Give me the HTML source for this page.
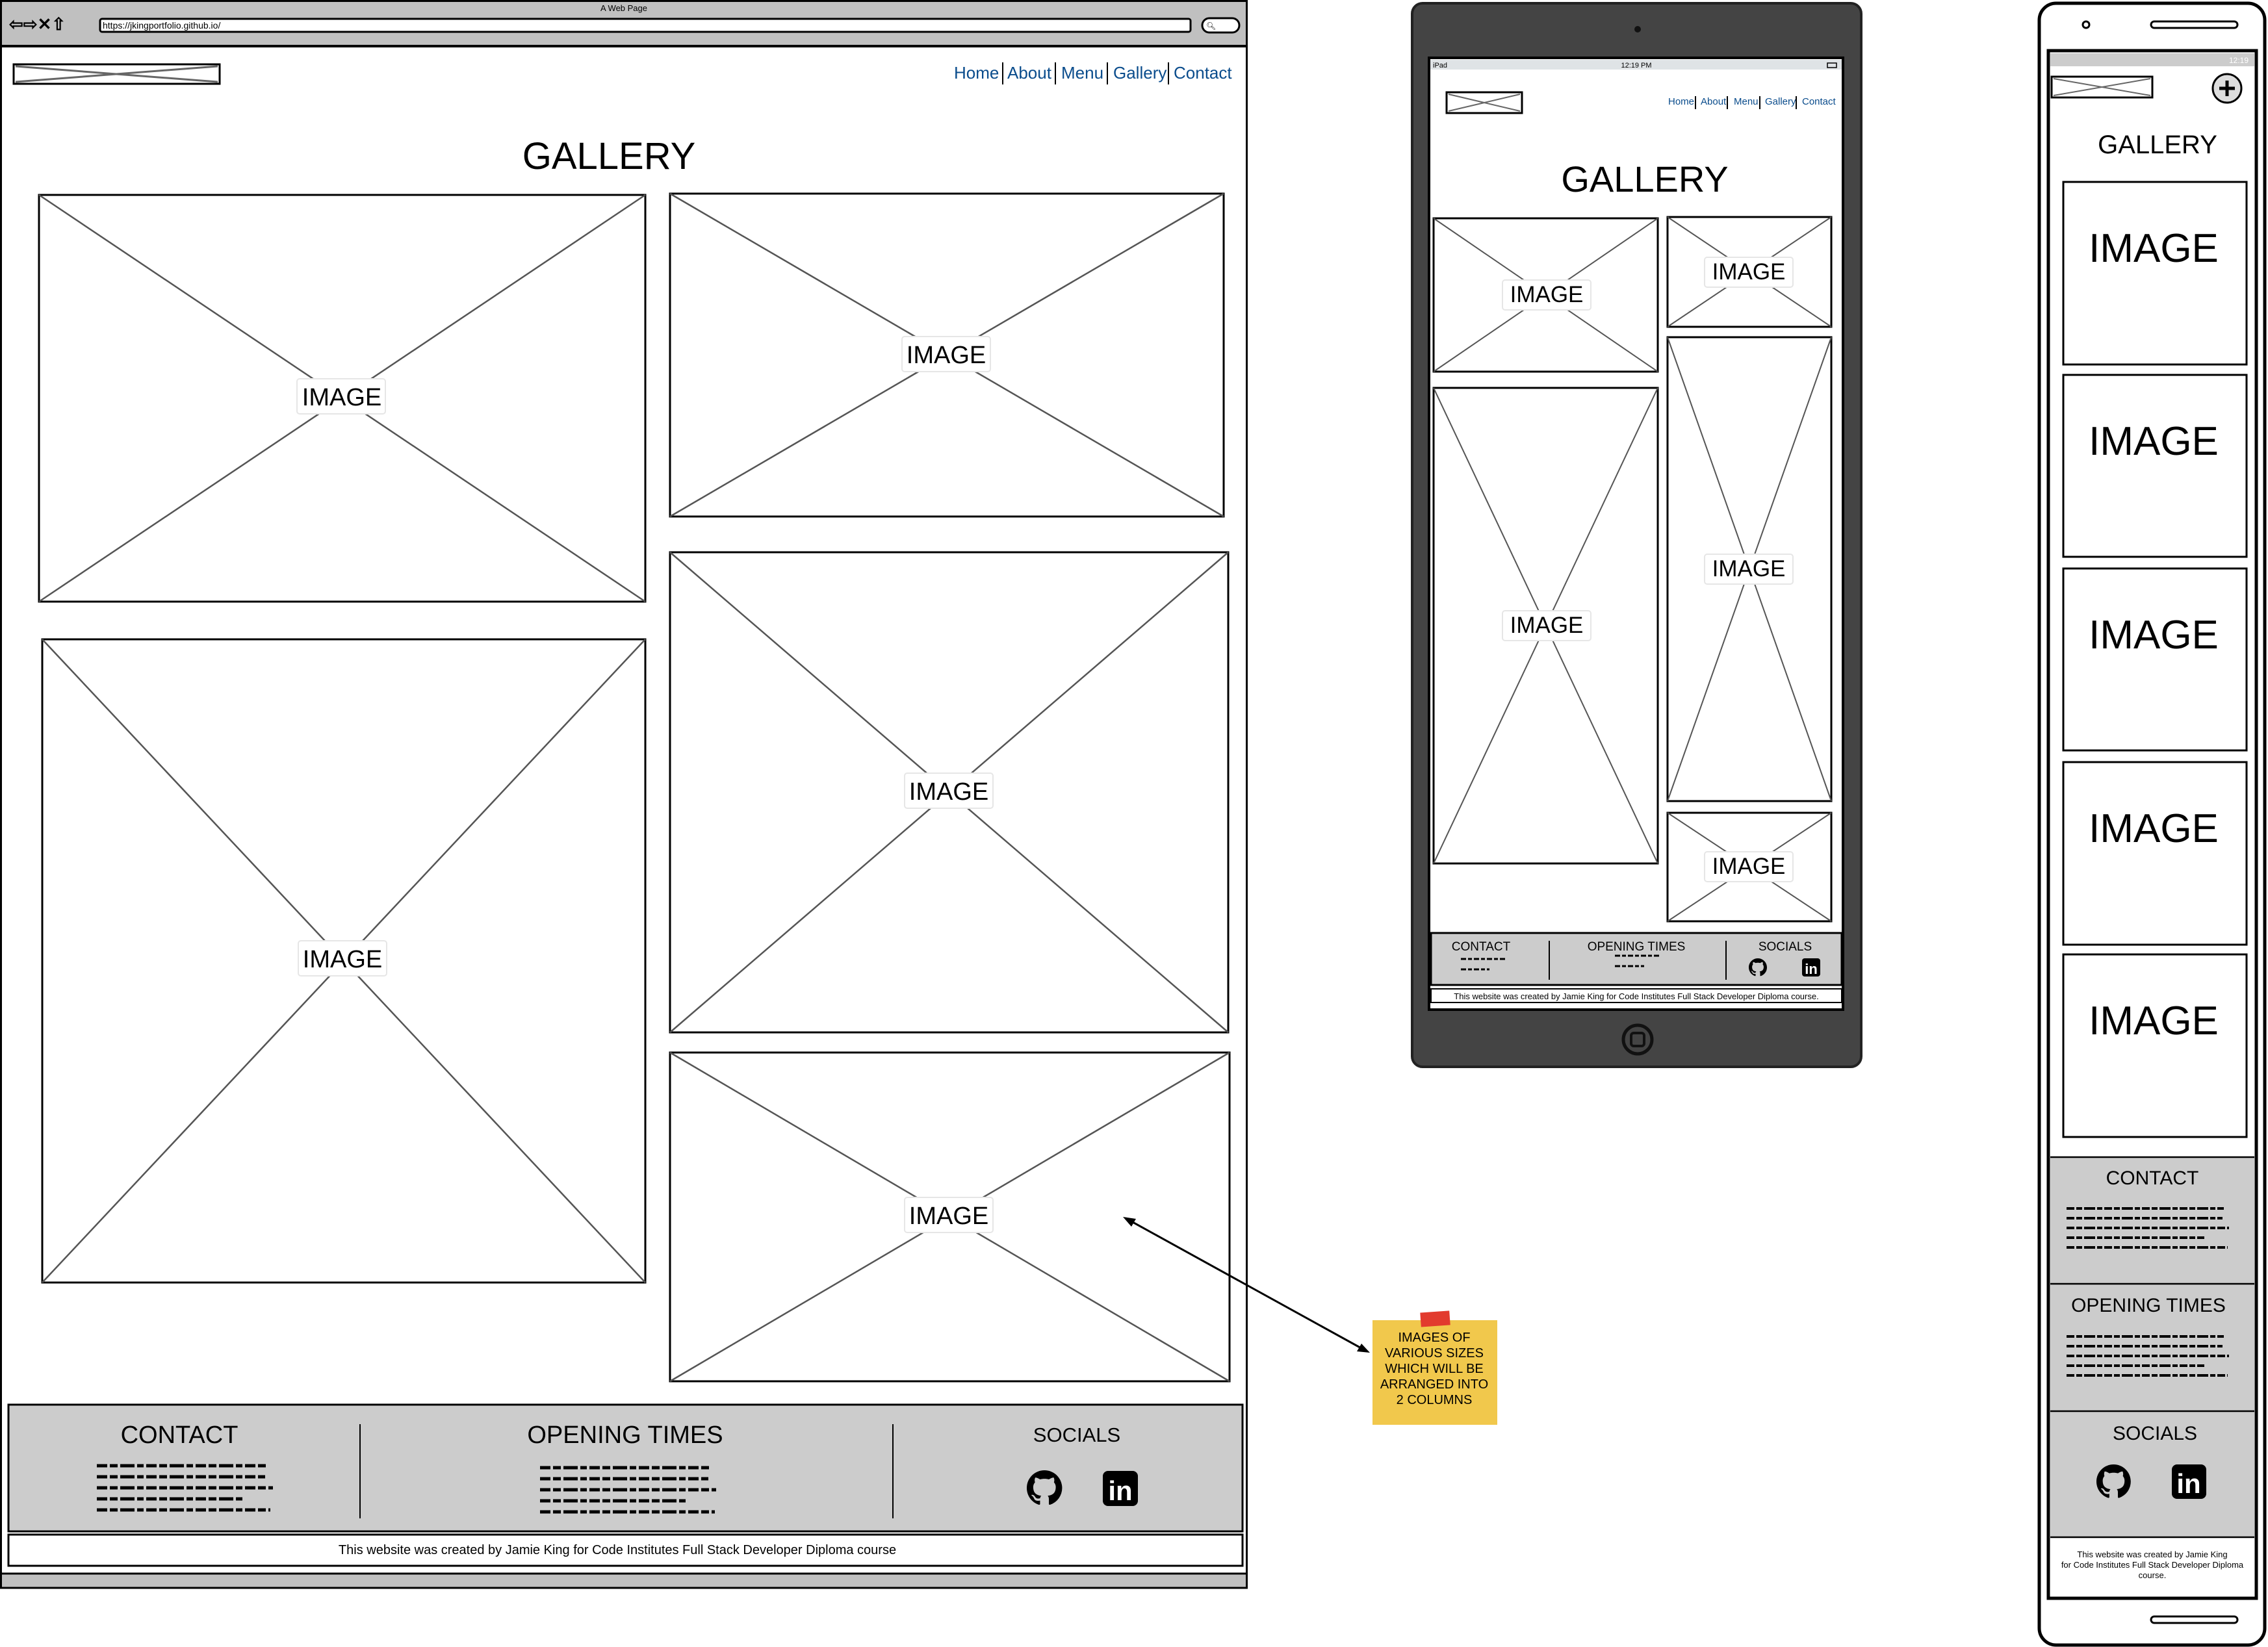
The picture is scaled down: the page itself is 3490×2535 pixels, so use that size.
<!DOCTYPE html>
<html><head><meta charset="utf-8"><style>
html,body{margin:0;padding:0;background:#fff;width:3490px;height:2535px;overflow:hidden}
svg{display:block}
text{font-family:"Liberation Sans",sans-serif;fill:#000}
</style></head><body>
<svg width="3490" height="2535" viewBox="0 0 3490 2535" xmlns="http://www.w3.org/2000/svg">
<defs>
<path id="gh" d="M8 0C3.58 0 0 3.58 0 8c0 3.54 2.29 6.53 5.47 7.59.4.07.55-.17.55-.38 0-.19-.01-.82-.01-1.49-2.01.37-2.53-.49-2.69-.94-.09-.23-.48-.94-.82-1.13-.28-.15-.68-.52-.01-.53.63-.01 1.08.58 1.23.82.72 1.21 1.87.87 2.33.66.07-.52.28-.87.51-1.07-1.78-.2-3.64-.89-3.64-3.95 0-.87.31-1.59.82-2.15-.08-.2-.36-1.02.08-2.12 0 0 .67-.21 2.2.82.64-.18 1.32-.27 2-.27.68 0 1.36.09 2 .27 1.53-1.04 2.2-.82 2.2-.82.44 1.1.16 1.92.08 2.12.51.56.82 1.27.82 2.15 0 3.07-1.87 3.75-3.65 3.95.29.25.54.73.54 1.48 0 1.07-.01 1.93-.01 2.2 0 .21.15.46.55.38A8.013 8.013 0 0 0 16 8c0-4.42-3.58-8-8-8z"/>
</defs>

<!-- ============ DESKTOP ============ -->
<rect x="1.5" y="1.5" width="1917" height="2442" fill="#fff" stroke="#000" stroke-width="3"/>
<rect x="1.5" y="1.5" width="1917" height="70" fill="#c0c0c0" stroke="#000" stroke-width="3"/>
<line x1="0" y1="71" x2="1919" y2="71" stroke="#000" stroke-width="4"/>
<text x="960" y="17" font-size="13" text-anchor="middle">A Web Page</text>
<text x="14" y="46" font-size="26" font-weight="bold">⇦⇨✕⇧</text>
<rect x="154" y="29" width="1678" height="20" rx="3" fill="#fff" stroke="#000" stroke-width="3"/>
<text x="158" y="44" font-size="14">https://jkingportfolio.github.io/</text>
<rect x="1850" y="28" width="57" height="22" rx="11" fill="#fff" stroke="#000" stroke-width="3"/>
<text x="1856" y="44" font-size="12">🔍︎</text>
<rect x="1.5" y="2422" width="1917" height="22" fill="#c0c0c0" stroke="#000" stroke-width="3"/>

<!-- logo -->
<rect x="21" y="99" width="317" height="30" fill="#fff" stroke="#000" stroke-width="3"/>
<line x1="24" y1="102" x2="335" y2="126" stroke="#666" stroke-width="3"/>
<line x1="24" y1="126" x2="335" y2="102" stroke="#666" stroke-width="3"/>
<!-- nav -->
<g font-size="26">
<text x="1468" y="121" style="fill:#0a4c8c">Home</text>
<text x="1550" y="121" style="fill:#0a4c8c">About</text>
<text x="1633" y="121" style="fill:#0a4c8c">Menu</text>
<text x="1713" y="121" style="fill:#0a4c8c">Gallery</text>
<text x="1806" y="121" style="fill:#0a4c8c">Contact</text>
</g>
<g stroke="#000" stroke-width="2">
<line x1="1543" y1="96" x2="1543" y2="130"/><line x1="1624" y1="96" x2="1624" y2="130"/>
<line x1="1704" y1="96" x2="1704" y2="130"/><line x1="1798" y1="96" x2="1798" y2="130"/>
</g>
<text x="937" y="260" font-size="58" text-anchor="middle">GALLERY</text>

<!-- desktop images -->
<g fill="#fff" stroke="#000" stroke-width="3">
<rect x="60" y="300" width="933" height="626"/>
<rect x="1031" y="298" width="852" height="497"/>
<rect x="65" y="984" width="928" height="990"/>
<rect x="1031" y="850" width="859" height="739"/>
<rect x="1031" y="1620" width="861" height="506"/>
</g>
<g stroke="#555" stroke-width="2.5">
<line x1="60" y1="300" x2="993" y2="926"/><line x1="60" y1="926" x2="993" y2="300"/>
<line x1="1031" y1="298" x2="1883" y2="795"/><line x1="1031" y1="795" x2="1883" y2="298"/>
<line x1="65" y1="984" x2="993" y2="1974"/><line x1="65" y1="1974" x2="993" y2="984"/>
<line x1="1031" y1="850" x2="1890" y2="1589"/><line x1="1031" y1="1589" x2="1890" y2="850"/>
<line x1="1031" y1="1620" x2="1892" y2="2126"/><line x1="1031" y1="2126" x2="1892" y2="1620"/>
</g>
<g fill="#fff" stroke="#e6e6e6" stroke-width="2">
<rect x="457" y="583" width="136" height="54" rx="4"/>
<rect x="1388" y="518" width="136" height="54" rx="4"/>
<rect x="459" y="1448" width="136" height="54" rx="4"/>
<rect x="1392" y="1190" width="136" height="54" rx="4"/>
<rect x="1392" y="1843" width="136" height="54" rx="4"/>
</g>
<g font-size="38" text-anchor="middle">
<text x="526" y="624">IMAGE</text>
<text x="1456" y="559">IMAGE</text>
<text x="527" y="1489">IMAGE</text>
<text x="1460" y="1231">IMAGE</text>
<text x="1460" y="1884">IMAGE</text>
</g>

<!-- desktop footer -->
<rect x="13" y="2162" width="1899" height="195" fill="#ccc" stroke="#000" stroke-width="3"/>
<line x1="554" y1="2192" x2="554" y2="2337" stroke="#000" stroke-width="2"/>
<line x1="1374" y1="2192" x2="1374" y2="2337" stroke="#000" stroke-width="2"/>
<text x="276" y="2221" font-size="38" text-anchor="middle">CONTACT</text>
<text x="962" y="2221" font-size="38" text-anchor="middle">OPENING TIMES</text>
<text x="1657" y="2219" font-size="31" text-anchor="middle">SOCIALS</text>
<g stroke="#000" stroke-width="5" stroke-dasharray="16 4 12 4 22 4 10 4">
<line x1="149" y1="2256" x2="410" y2="2256"/>
<line x1="149" y1="2273" x2="408" y2="2273"/>
<line x1="149" y1="2290" x2="420" y2="2290"/>
<line x1="149" y1="2307" x2="374" y2="2307"/>
<line x1="149" y1="2324" x2="416" y2="2324"/>
<line x1="831" y1="2259" x2="1092" y2="2259"/>
<line x1="831" y1="2276" x2="1090" y2="2276"/>
<line x1="831" y1="2293" x2="1102" y2="2293"/>
<line x1="831" y1="2310" x2="1056" y2="2310"/>
<line x1="831" y1="2327" x2="1100" y2="2327"/>
</g>
<g transform="translate(1580,2263) scale(3.4)"><use href="#gh" fill="#000"/></g>
<rect x="1697" y="2264" width="54" height="54" rx="8" fill="#000"/>
<text x="1724" y="2309" font-size="42" font-weight="bold" text-anchor="middle" style="fill:#fff">in</text>
<rect x="13" y="2362" width="1899" height="48" fill="#fff" stroke="#000" stroke-width="3"/>
<text x="950" y="2392" font-size="20" text-anchor="middle">This website was created by Jamie King for Code Institutes Full Stack Developer Diploma course</text>

<!-- arrow + sticky -->
<line x1="1732" y1="1875" x2="2100" y2="2078" stroke="#000" stroke-width="3"/>
<polygon points="1728,1873 1748,1876 1741,1888" fill="#000"/>
<polygon points="2108,2082 2088,2080 2095,2068" fill="#000"/>
<rect x="2112" y="2032" width="192" height="161" fill="#f1c84c"/>
<rect x="2186" y="2019" width="45" height="22" fill="#e23b2e" transform="rotate(-4 2208 2030)"/>
<g font-size="20" text-anchor="middle">
<text x="2207" y="2065">IMAGES OF</text>
<text x="2207" y="2089">VARIOUS SIZES</text>
<text x="2207" y="2113">WHICH WILL BE</text>
<text x="2207" y="2137">ARRANGED INTO</text>
<text x="2207" y="2161">2 COLUMNS</text>
</g>

<!-- ============ TABLET ============ -->
<rect x="2173" y="5" width="691" height="1637" rx="16" fill="#444" stroke="#222" stroke-width="4"/>
<circle cx="2520" cy="45" r="5" fill="#111"/>
<circle cx="2520" cy="1600" r="22" fill="none" stroke="#111" stroke-width="5"/>
<rect x="2510" y="1590" width="20" height="20" rx="4" fill="none" stroke="#111" stroke-width="4"/>
<rect x="2199" y="89" width="637" height="1465" fill="#fff" stroke="#000" stroke-width="4"/>
<rect x="2201" y="92" width="633" height="15" fill="#dfe3e6"/>
<text x="2205" y="104" font-size="11">iPad</text>
<text x="2518" y="104" font-size="11" text-anchor="middle">12:19 PM</text>
<rect x="2812" y="97" width="14" height="7" fill="none" stroke="#000" stroke-width="1.5"/>
<rect x="2226" y="142" width="116" height="32" fill="#fff" stroke="#000" stroke-width="3"/>
<line x1="2229" y1="145" x2="2339" y2="171" stroke="#666" stroke-width="2"/>
<line x1="2229" y1="171" x2="2339" y2="145" stroke="#666" stroke-width="2"/>
<g font-size="15">
<text x="2567" y="161" style="fill:#0a4c8c">Home</text>
<text x="2617" y="161" style="fill:#0a4c8c">About</text>
<text x="2668" y="161" style="fill:#0a4c8c">Menu</text>
<text x="2716" y="161" style="fill:#0a4c8c">Gallery</text>
<text x="2773" y="161" style="fill:#0a4c8c">Contact</text>
</g>
<g stroke="#000" stroke-width="2">
<line x1="2609" y1="148" x2="2609" y2="168"/><line x1="2658" y1="148" x2="2658" y2="168"/>
<line x1="2708" y1="148" x2="2708" y2="168"/><line x1="2764" y1="148" x2="2764" y2="168"/>
</g>
<text x="2531" y="295" font-size="56" text-anchor="middle">GALLERY</text>
<g fill="#fff" stroke="#000" stroke-width="3">
<rect x="2206" y="336" width="345" height="236"/>
<rect x="2566" y="334" width="252" height="169"/>
<rect x="2206" y="597" width="345" height="732"/>
<rect x="2566" y="519" width="252" height="714"/>
<rect x="2566" y="1251" width="252" height="167"/>
</g>
<g stroke="#555" stroke-width="2">
<line x1="2206" y1="336" x2="2551" y2="572"/><line x1="2206" y1="572" x2="2551" y2="336"/>
<line x1="2566" y1="334" x2="2818" y2="503"/><line x1="2566" y1="503" x2="2818" y2="334"/>
<line x1="2206" y1="597" x2="2551" y2="1329"/><line x1="2206" y1="1329" x2="2551" y2="597"/>
<line x1="2566" y1="519" x2="2818" y2="1233"/><line x1="2566" y1="1233" x2="2818" y2="519"/>
<line x1="2566" y1="1251" x2="2818" y2="1418"/><line x1="2566" y1="1418" x2="2818" y2="1251"/>
</g>
<g fill="#fff" stroke="#e6e6e6" stroke-width="2">
<rect x="2312" y="431" width="136" height="46" rx="4"/>
<rect x="2623" y="396" width="136" height="46" rx="4"/>
<rect x="2312" y="940" width="136" height="46" rx="4"/>
<rect x="2623" y="853" width="136" height="46" rx="4"/>
<rect x="2623" y="1311" width="136" height="46" rx="4"/>
</g>
<g font-size="35" text-anchor="middle">
<text x="2380" y="465">IMAGE</text>
<text x="2691" y="430">IMAGE</text>
<text x="2380" y="974">IMAGE</text>
<text x="2691" y="887">IMAGE</text>
<text x="2691" y="1345">IMAGE</text>
</g>
<rect x="2202" y="1436" width="632" height="80" fill="#ccc" stroke="#000" stroke-width="3"/>
<line x1="2384" y1="1448" x2="2384" y2="1508" stroke="#000" stroke-width="2"/>
<line x1="2656" y1="1448" x2="2656" y2="1508" stroke="#000" stroke-width="2"/>
<g font-size="19" text-anchor="middle">
<text x="2279" y="1463">CONTACT</text>
<text x="2518" y="1463">OPENING TIMES</text>
<text x="2747" y="1463">SOCIALS</text>
</g>
<g stroke="#000" stroke-width="3" stroke-dasharray="8 3 6 3">
<line x1="2248" y1="1476" x2="2318" y2="1476"/><line x1="2248" y1="1492" x2="2292" y2="1492"/>
<line x1="2485" y1="1471" x2="2555" y2="1471"/><line x1="2485" y1="1487" x2="2530" y2="1487"/>
</g>
<g transform="translate(2691,1475) scale(1.75)"><use href="#gh" fill="#000"/></g>
<rect x="2773" y="1475" width="28" height="28" rx="4" fill="#000"/>
<text x="2787" y="1499" font-size="22" font-weight="bold" text-anchor="middle" style="fill:#fff">in</text>
<rect x="2202" y="1522" width="632" height="21" fill="#fff" stroke="#000" stroke-width="2"/>
<text x="2518" y="1538" font-size="13" text-anchor="middle">This website was created by Jamie King for Code Institutes Full Stack Developer Diploma course.</text>

<!-- ============ PHONE ============ -->
<rect x="3138" y="5" width="347" height="2527" rx="26" fill="#fff" stroke="#000" stroke-width="5"/>
<circle cx="3210" cy="38" r="5" fill="none" stroke="#000" stroke-width="3"/>
<rect x="3310" y="33" width="133" height="10" rx="5" fill="none" stroke="#000" stroke-width="3"/>
<rect x="3310" y="2488" width="133" height="10" rx="5" fill="none" stroke="#000" stroke-width="3"/>
<rect x="3152" y="78" width="320" height="2382" fill="#fff" stroke="#000" stroke-width="5"/>
<rect x="3155" y="82" width="314" height="20" fill="#ccc"/>
<text x="3460" y="97" font-size="12" text-anchor="end" style="fill:#fff">12:19</text>
<rect x="3157" y="118" width="155" height="32" fill="#fff" stroke="#000" stroke-width="3"/>
<line x1="3160" y1="121" x2="3309" y2="147" stroke="#666" stroke-width="2"/>
<line x1="3160" y1="147" x2="3309" y2="121" stroke="#666" stroke-width="2"/>
<circle cx="3427" cy="136" r="22" fill="#ddd" stroke="#000" stroke-width="3"/>
<line x1="3415" y1="136" x2="3439" y2="136" stroke="#000" stroke-width="5"/>
<line x1="3427" y1="124" x2="3427" y2="148" stroke="#000" stroke-width="5"/>
<text x="3320" y="236" font-size="40" text-anchor="middle">GALLERY</text>
<g fill="#fff" stroke="#000" stroke-width="3">
<rect x="3175" y="280" width="282" height="281"/>
<rect x="3175" y="577" width="282" height="280"/>
<rect x="3175" y="875" width="282" height="280"/>
<rect x="3175" y="1173" width="282" height="281"/>
<rect x="3175" y="1469" width="282" height="281"/>
</g>
<g font-size="62" text-anchor="middle">
<text x="3314" y="403">IMAGE</text>
<text x="3314" y="700">IMAGE</text>
<text x="3314" y="998">IMAGE</text>
<text x="3314" y="1296">IMAGE</text>
<text x="3314" y="1592">IMAGE</text>
</g>
<rect x="3155" y="1781" width="314" height="584" fill="#ccc"/>
<g stroke="#000" stroke-width="2.5">
<line x1="3155" y1="1781" x2="3469" y2="1781"/><line x1="3155" y1="1976" x2="3469" y2="1976"/>
<line x1="3155" y1="2172" x2="3469" y2="2172"/><line x1="3155" y1="2366" x2="3469" y2="2366"/>
</g>
<g font-size="30" text-anchor="middle">
<text x="3312" y="1823">CONTACT</text>
<text x="3306" y="2019">OPENING TIMES</text>
<text x="3316" y="2216">SOCIALS</text>
</g>
<g stroke="#000" stroke-width="4" stroke-dasharray="12 3 9 3 17 3 8 3">
<line x1="3180" y1="1860" x2="3422" y2="1860"/><line x1="3180" y1="1875" x2="3420" y2="1875"/>
<line x1="3180" y1="1890" x2="3430" y2="1890"/><line x1="3180" y1="1905" x2="3392" y2="1905"/>
<line x1="3180" y1="1920" x2="3428" y2="1920"/>
<line x1="3180" y1="2057" x2="3422" y2="2057"/><line x1="3180" y1="2072" x2="3420" y2="2072"/>
<line x1="3180" y1="2087" x2="3430" y2="2087"/><line x1="3180" y1="2102" x2="3392" y2="2102"/>
<line x1="3180" y1="2117" x2="3428" y2="2117"/>
</g>
<g transform="translate(3226,2254) scale(3.3)"><use href="#gh" fill="#000"/></g>
<rect x="3342" y="2254" width="53" height="53" rx="8" fill="#000"/>
<text x="3368" y="2298" font-size="42" font-weight="bold" text-anchor="middle" style="fill:#fff">in</text>
<g font-size="13" text-anchor="middle">
<text x="3312" y="2397">This website was created by Jamie King</text>
<text x="3312" y="2413">for Code Institutes Full Stack Developer Diploma</text>
<text x="3312" y="2429">course.</text>
</g>
</svg>
</body></html>
